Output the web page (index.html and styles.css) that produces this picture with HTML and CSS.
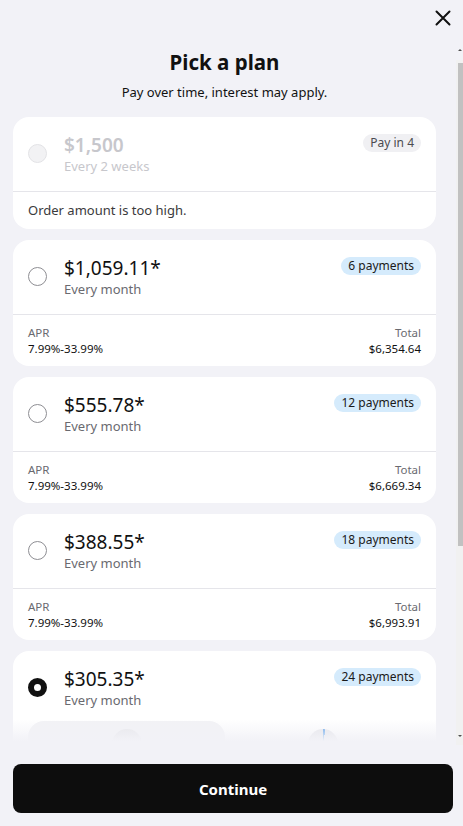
FILE: index.html
```html
<!DOCTYPE html>
<html lang="en">
<head>
  <meta charset="UTF-8">
  <meta name="viewport" content="width=device-width, initial-scale=1.0">
  <title>Pick a plan</title>
  <link rel="stylesheet" href="styles.css">
</head>
<body>
  <div class="sheet">
    <div class="topbar">
      <button class="close" aria-label="Close">
        <svg width="16" height="16" viewBox="0 0 16 16"><path d="M1.5 1.5 L14.5 14.5 M14.5 1.5 L1.5 14.5" stroke="#111" stroke-width="2" stroke-linecap="round"/></svg>
      </button>
    </div>

    <div class="scroll-wrap">
      <div class="scroller">
        <h1 class="title">Pick a plan</h1>
        <p class="subtitle">Pay over time, interest may apply.</p>

        <!-- pay in 4, not available -->
        <div class="plan disabled">
          <div class="plan-top">
            <span class="radio"></span>
            <div class="amount">
              <div class="price">$1,500</div>
              <div class="freq">Every 2 weeks</div>
            </div>
            <span class="badge grey">Pay in 4</span>
          </div>
          <div class="plan-note">Order amount is too high.</div>
        </div>

        <div class="plan">
          <div class="plan-top">
            <span class="radio"></span>
            <div class="amount">
              <div class="price">$1,059.11*</div>
              <div class="freq">Every month</div>
            </div>
            <span class="badge">6 payments</span>
          </div>
          <div class="plan-info">
            <div><div class="label">APR</div><div class="value">7.99%-33.99%</div></div>
            <div class="right"><div class="label">Total</div><div class="value">$6,354.64</div></div>
          </div>
        </div>

        <div class="plan">
          <div class="plan-top">
            <span class="radio"></span>
            <div class="amount">
              <div class="price">$555.78*</div>
              <div class="freq">Every month</div>
            </div>
            <span class="badge">12 payments</span>
          </div>
          <div class="plan-info">
            <div><div class="label">APR</div><div class="value">7.99%-33.99%</div></div>
            <div class="right"><div class="label">Total</div><div class="value">$6,669.34</div></div>
          </div>
        </div>

        <div class="plan">
          <div class="plan-top">
            <span class="radio"></span>
            <div class="amount">
              <div class="price">$388.55*</div>
              <div class="freq">Every month</div>
            </div>
            <span class="badge">18 payments</span>
          </div>
          <div class="plan-info">
            <div><div class="label">APR</div><div class="value">7.99%-33.99%</div></div>
            <div class="right"><div class="label">Total</div><div class="value">$6,993.91</div></div>
          </div>
        </div>

        <div class="plan selected">
          <div class="plan-top short">
            <span class="radio"></span>
            <div class="amount">
              <div class="price">$305.35*</div>
              <div class="freq">Every month</div>
            </div>
            <span class="badge">24 payments</span>
          </div>
          <div class="schedule">
            <div class="due-box"><span class="dot"></span></div>
            <div class="pie-cell"><span class="pie"></span></div>
          </div>
        </div>
      </div>
      <!-- drawn scrollbar, the native one is hidden in this window -->
      <div class="scrollbar" aria-hidden="true">
        <span class="arrow up"></span>
        <div class="thumb"></div>
        <span class="arrow down"></span>
      </div>
    </div>

    <div class="footer">
      <button class="continue">Continue</button>
    </div>
  </div>
</body>
</html>
```

FILE: styles.css
```css
html, body {
  margin: 0;
  height: 100%;
}
body {
  font-family: "Noto Sans", "Open Sans", Arial, sans-serif;
  background-color: #f2f2f7;
  color: #111111;
}
.sheet {
  height: 826px;
  display: flex;
  flex-direction: column;
}
.topbar {
  height: 45px;
  flex-shrink: 0;
  display: flex;
  justify-content: flex-end;
  align-items: flex-start;
}
.close {
  margin: 10px 12px 0 0;
  padding: 0;
  width: 16px;
  height: 16px;
  border: none;
  background: none;
  cursor: pointer;
}
.close svg {
  display: block;
}
.scroll-wrap {
  position: relative;
  height: 700px;
  flex-shrink: 0;
}
.scroll-wrap::after {
  content: "";
  position: absolute;
  left: 0;
  right: 7px;
  bottom: 0;
  height: 26px;
  background: linear-gradient(rgba(242, 242, 247, 0), #f2f2f7 85%);
  pointer-events: none;
}
.scroller {
  height: 100%;
  margin-right: 7px;
  overflow-y: scroll;
  scrollbar-width: none;
  padding: 0 20px 0 13px;
  box-sizing: border-box;
}
.scroller::-webkit-scrollbar {
  display: none;
}
.scrollbar {
  position: absolute;
  right: 0;
  top: 15px;
  bottom: 0;
  width: 7px;
  background: #f1f1f1;
}
.scrollbar .thumb {
  position: absolute;
  top: 3px;
  left: 2px;
  right: 0;
  height: 483px;
  background: #c1c1c1;
}
.arrow {
  position: absolute;
  left: 2px;
  width: 0;
  height: 0;
  border-left: 2px solid transparent;
  border-right: 2px solid transparent;
}
.arrow.up {
  top: -11px;
  border-bottom: 2px solid #505050;
}
.arrow.down {
  bottom: 8px;
  border-top: 2px solid #505050;
}
.title {
  margin: 4px 0 0;
  font-size: 20.5px;
  line-height: 26px;
  font-weight: 700;
  text-align: center;
}
.subtitle {
  margin: 8px 0 16px;
  font-size: 13px;
  line-height: 18px;
  text-align: center;
}
.plan {
  background: #ffffff;
  border-radius: 16px;
  margin-bottom: 11px;
  overflow: hidden;
}
.plan-top {
  display: flex;
  align-items: center;
  padding: 15px 15px 16px;
  min-height: 43px;
}
.radio {
  width: 19px;
  height: 19px;
  border-radius: 50%;
  border: 1px solid #8e8e93;
  box-sizing: border-box;
  flex-shrink: 0;
  margin-right: 17px;
}
.amount {
  flex: 1;
}
.price {
  font-size: 19px;
  line-height: 26px;
}
.freq {
  font-size: 13px;
  line-height: 17px;
  color: #6a6a70;
}
.badge {
  align-self: flex-start;
  margin-top: 2px;
  padding: 0 7px;
  height: 18px;
  line-height: 18px;
  border-radius: 9px;
  background: #d5ebfc;
  font-size: 12px;
  color: #1a1a1a;
}
.badge.grey {
  background: #f0f0f3;
  color: #4b4b50;
}
.disabled .radio {
  background: #f2f2f4;
  border-color: #e3e3e6;
}
.disabled .price {
  color: #c7c7cc;
  font-weight: 600;
}
.disabled .freq {
  color: #c7c7cc;
}
.plan-note {
  border-top: 1px solid #e5e5ea;
  padding: 10px 15px;
  font-size: 13px;
  line-height: 17px;
  color: #3a3a3c;
}
.plan-info {
  border-top: 1px solid #e5e5ea;
  padding: 10px 15px 9px;
  display: flex;
  justify-content: space-between;
  font-size: 11.5px;
  line-height: 16px;
}
.plan-info .right {
  text-align: right;
}
.label {
  color: #6a6a70;
}
.value {
  color: #111111;
}
.selected .radio {
  border: 6px solid #111111;
}
.plan-top.short {
  padding-bottom: 12px;
}
.schedule {
  display: grid;
  grid-template-columns: 197px 1fr;
  padding: 0 15px 16px;
}
.due-box {
  height: 90px;
  border-radius: 16px;
  background: #f2f2f5;
  display: flex;
  justify-content: center;
  padding-top: 8px;
  box-sizing: border-box;
}
.dot {
  width: 30px;
  height: 30px;
  border-radius: 50%;
  background: #e4e4e8;
}
.pie-cell {
  display: flex;
  justify-content: center;
  padding-top: 8px;
}
.pie {
  width: 30px;
  height: 30px;
  border-radius: 50%;
  background: conic-gradient(#3a8ee6 0deg 9deg, #e4e4e8 9deg 360deg);
}
.footer {
  flex: 1;
  padding: 19px 10px 0 13px;
}
.continue {
  width: 100%;
  height: 49px;
  border: none;
  border-radius: 8px;
  background: #0d0d0d;
  color: #ffffff;
  font-family: inherit;
  font-size: 15px;
  font-weight: 700;
  cursor: pointer;
}
```
